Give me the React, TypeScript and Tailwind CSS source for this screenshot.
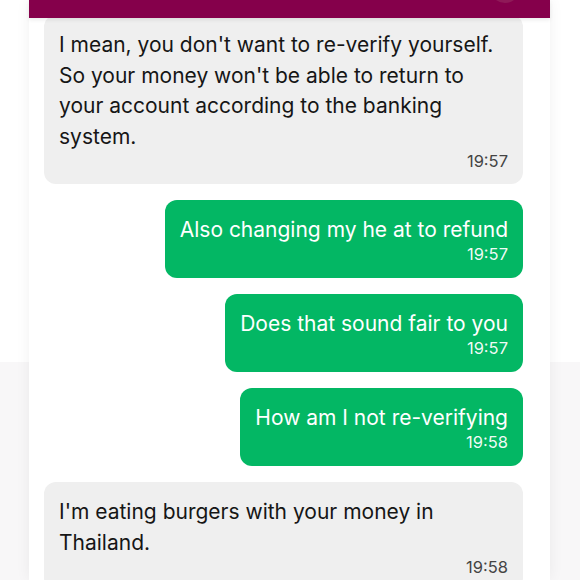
import React from 'react';

type Message = {
  id: number;
  text: string;
  time: string;
  mine: boolean;
};

const messages: Message[] = [
  {
    id: 1,
    text: "I mean, you don't want to re-verify yourself. So your money won't be able to return to your account according to the banking system.",
    time: '19:57',
    mine: false,
  },
  { id: 2, text: 'Also changing my he at to refund', time: '19:57', mine: true },
  { id: 3, text: 'Does that sound fair to you', time: '19:57', mine: true },
  { id: 4, text: 'How am I not re-verifying', time: '19:58', mine: true },
  {
    id: 5,
    text: "I'm eating burgers with your money in Thailand.",
    time: '19:58',
    mine: false,
  },
];

const Bubble: React.FC<{ message: Message }> = ({ message }) => {
  if (message.mine) {
    return (
      <div className="flex justify-end">
        <div className="rounded-[12px] bg-[#03b764] px-[15px] py-[15px] text-right text-white">
          <p className="text-[21px] leading-[30px]">{message.text}</p>
          <p className="text-[16.5px] leading-[18px] text-white/95">{message.time}</p>
        </div>
      </div>
    );
  }

  return (
    <div className="rounded-[12px] bg-[#efefef] pl-[15px] pr-[15px] pt-[15px] pb-[14px] text-[#161616]">
      <p className="text-[21px] leading-[30.5px]">{message.text}</p>
      <p className="text-right text-[16.5px] leading-[18px] text-[#444444]">{message.time}</p>
    </div>
  );
};

export default function App() {
  return (
    <div
      className="relative h-[580px] w-[580px] overflow-hidden bg-white"
      style={{ fontFamily: 'Inter, "Noto Sans", sans-serif' }}
    >
      {/* Page backdrop: lighter band below */}
      <div className="absolute inset-x-0 top-[362px] bottom-0 bg-[#f8f7f8]" />

      {/* Chat card */}
      <div className="relative ml-[29px] flex h-full w-[521px] flex-col bg-white shadow-[0_0_14px_rgba(0,0,0,0.06)]">
        {/* Header */}
        <div className="relative h-[18px] shrink-0 overflow-hidden bg-[#85004b] shadow-[0_2px_4px_rgba(0,0,0,0.08)]">
          <div className="absolute -top-[27px] left-[461px] h-[30px] w-[30px] rounded-full bg-[#8f1a58]" />
        </div>

        {/* Messages */}
        <div className="flex-1 overflow-hidden">
          <div className="-mt-[3px] flex flex-col gap-[16px] pl-[15px] pr-[27px]">
            {messages.map((m) => (
              <Bubble key={m.id} message={m} />
            ))}
          </div>
        </div>
      </div>
    </div>
  );
}
